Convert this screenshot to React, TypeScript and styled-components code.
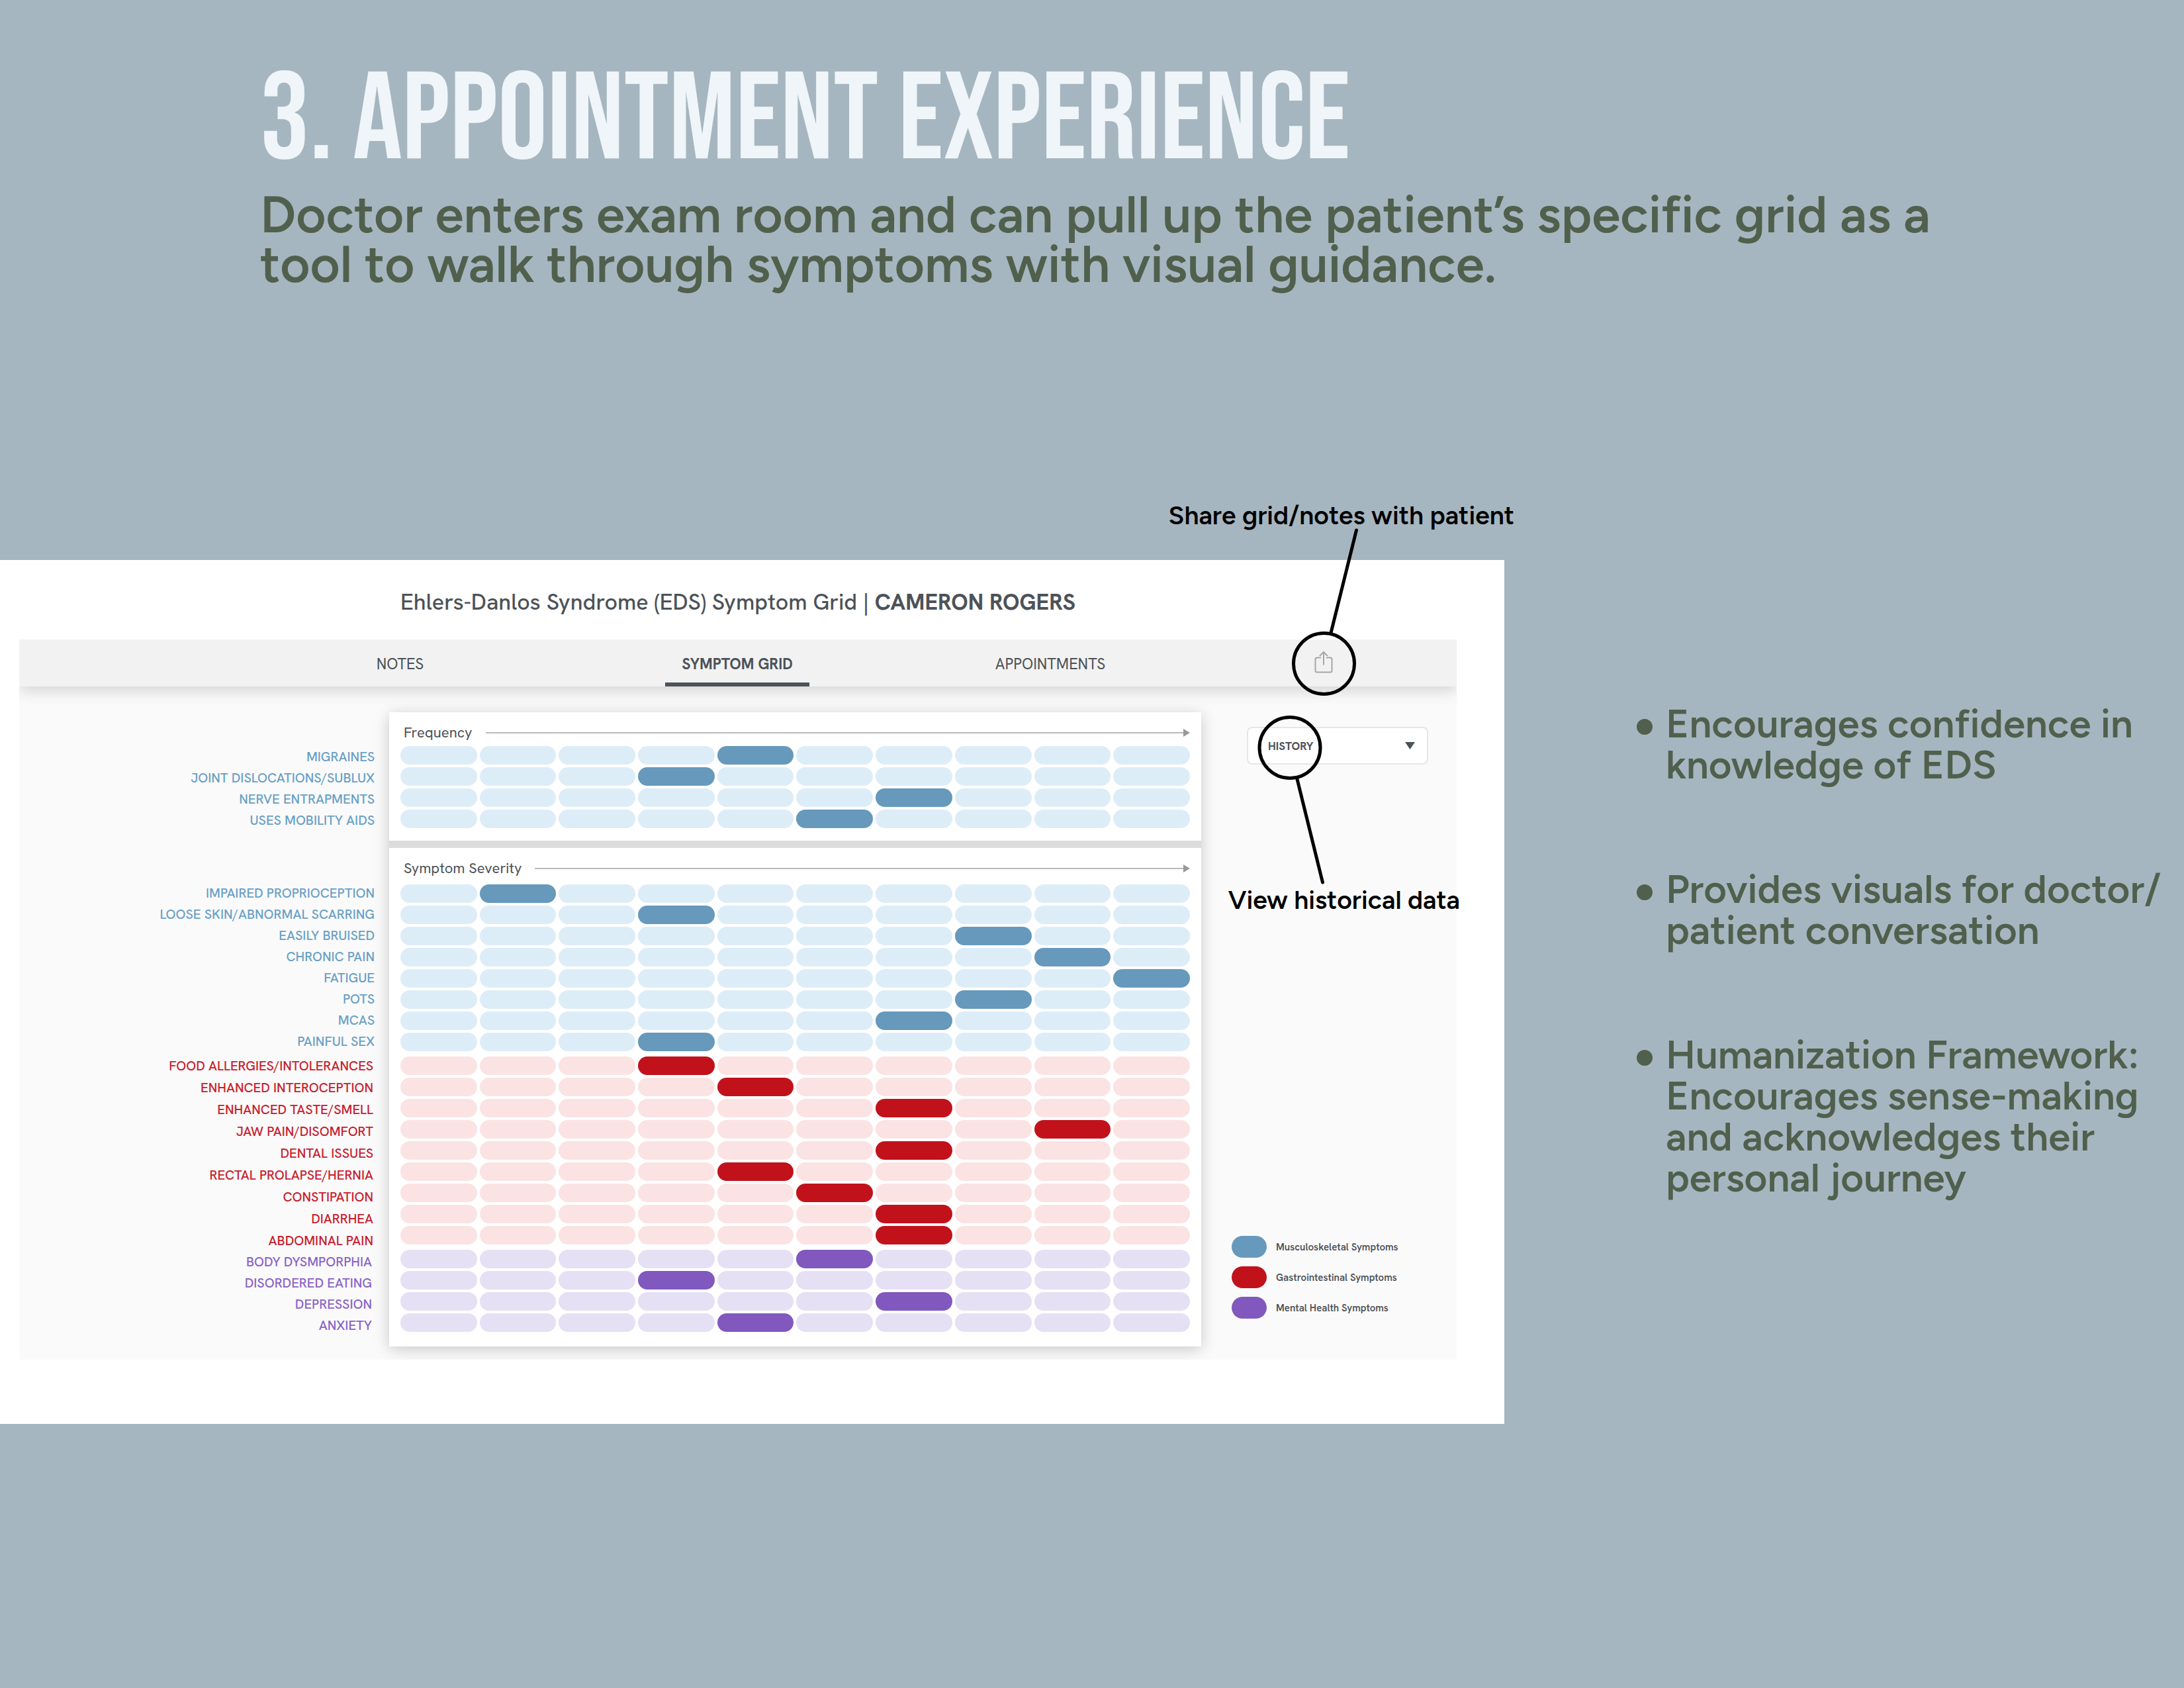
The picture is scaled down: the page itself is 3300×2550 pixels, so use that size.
import React from "react";
import styled, { createGlobalStyle } from "styled-components";

const displayFont = `"Bebas Neue", "Roboto Condensed", Roboto, sans-serif`;
const copyFont = `Figtree, Lato, Inter, sans-serif`;
const uiFont = `"Hanken Grotesk", Lato, Roboto, sans-serif`;

const ink = "#4d5258";

type Tone = "blue" | "red" | "purple";

const tones: Record<Tone, { solid: string; soft: string; text: string; inset: number; gap: number }> = {
  blue: { solid: "#6699bb", soft: "#ddedf8", text: "#68a0c6", inset: 22, gap: 8 },
  red: { solid: "#c1121c", soft: "#fbe3e3", text: "#c8202c", inset: 24, gap: 9 },
  purple: { solid: "#8058be", soft: "#e6e0f4", text: "#8a62c8", inset: 26, gap: 8 },
};

type Symptom = [name: string, level: number];
type Group = { id: string; tone: Tone; before: number; symptoms: Symptom[] };

const frequency: Group[] = [
  {
    id: "frequency",
    tone: "blue",
    before: 0,
    symptoms: [
      ["MIGRAINES", 5],
      ["JOINT DISLOCATIONS/SUBLUX", 4],
      ["NERVE ENTRAPMENTS", 7],
      ["USES MOBILITY AIDS", 6],
    ],
  },
];

const severity: Group[] = [
  {
    id: "musculoskeletal",
    tone: "blue",
    before: 86,
    symptoms: [
      ["IMPAIRED PROPRIOCEPTION", 2],
      ["LOOSE SKIN/ABNORMAL SCARRING", 4],
      ["EASILY BRUISED", 8],
      ["CHRONIC PAIN", 9],
      ["FATIGUE", 10],
      ["POTS", 8],
      ["MCAS", 7],
      ["PAINFUL SEX", 4],
    ],
  },
  {
    id: "gastrointestinal",
    tone: "red",
    before: 13,
    symptoms: [
      ["FOOD ALLERGIES/INTOLERANCES", 4],
      ["ENHANCED INTEROCEPTION", 5],
      ["ENHANCED TASTE/SMELL", 7],
      ["JAW PAIN/DISOMFORT", 9],
      ["DENTAL ISSUES", 7],
      ["RECTAL PROLAPSE/HERNIA", 5],
      ["CONSTIPATION", 6],
      ["DIARRHEA", 7],
      ["ABDOMINAL PAIN", 7],
    ],
  },
  {
    id: "mental",
    tone: "purple",
    before: 8,
    symptoms: [
      ["BODY DYSMPORPHIA", 6],
      ["DISORDERED EATING", 4],
      ["DEPRESSION", 7],
      ["ANXIETY", 5],
    ],
  },
];

const levels = Array.from({ length: 10 }, (_, i) => i + 1);

const GlobalStyle = createGlobalStyle`
  *, *::before, *::after { box-sizing: border-box; }
  body { margin: 0; background: #a6b6c0; }
  h1, h2, h3, p, ul { margin: 0; padding: 0; font-weight: inherit; }
  ul { list-style: none; }
  button, select, input { font: inherit; color: inherit; margin: 0; }
`;

const Page = styled.div`
  min-height: 100vh;
  overflow-x: hidden;
  background: #a6b6c0;
`;

const Intro = styled.header`
  padding: 99px 300px 0 393px;
`;

const Title = styled.h1`
  color: #eff5f8;
  font: 400 187px/168px ${displayFont};
`;

const Subtitle = styled.p`
  margin-top: 20px;
  color: #51604d;
  font: 600 78px/75px ${copyFont};
`;

const Main = styled.main`
  display: grid;
  grid-template-columns: 2273fr 1027fr;
  align-items: start;
  margin-top: 409px;
`;

const Panel = styled.section`
  position: relative;
  padding: 0 72px 97px 29px;
  background: #ffffff;
  color: ${ink};
  font-family: ${uiFont};
`;

const PanelTitle = styled.h2`
  padding-top: 6px;
  font-size: 34px;
  font-weight: 500;
  line-height: 114px;
  text-align: center;

  strong {
    font-weight: 700;
  }
`;

const Screen = styled.div`
  overflow: hidden;
  background: #fafafa;
`;

const Nav = styled.nav`
  position: relative;
  display: grid;
  grid-template-columns: 497fr 522fr 424fr 402fr;
  justify-items: center;
  height: 71px;
  padding-left: 327px;
  background: #f2f2f2;
  box-shadow: 0 6px 22px rgba(0, 0, 0, 0.16);
`;

const Tab = styled.button<{ $active?: boolean }>`
  padding: 2px 25px 0;
  border: 0;
  background: none;
  box-shadow: ${(p) => (p.$active ? `inset 0 -6px ${ink}` : "none")};
  font-size: 23px;
  font-weight: ${(p) => (p.$active ? 700 : 400)};
  cursor: pointer;
`;

const IconButton = styled.button`
  display: flex;
  align-items: center;
  padding: 0 12px 4px;
  border: 0;
  background: none;
  cursor: pointer;
`;

const Board = styled.div`
  display: grid;
  grid-template-columns: 559fr 1227fr 386fr;
  padding: 39px 0 20px;
`;

const Labels = styled.div`
  padding-top: 55px;
`;

const LabelGroup = styled.ul<{ $tone: Tone; $before: number }>`
  display: flex;
  flex-direction: column;
  gap: ${(p) => tones[p.$tone].gap}px;
  margin-top: ${(p) => p.$before}px;
  padding-right: ${(p) => tones[p.$tone].inset}px;
  color: ${(p) => tones[p.$tone].text};
  font-size: 20px;
  font-weight: 500;
  line-height: 24px;
  text-align: right;
  white-space: nowrap;
`;

const Cards = styled.div`
  display: flex;
  flex-direction: column;
  gap: 11px;
  background: #dcdcdc;
  box-shadow: 0 4px 22px rgba(0, 0, 0, 0.2);
`;

const Card = styled.section<{ $gap: number; $bottom: number }>`
  display: flex;
  flex-direction: column;
  gap: ${(p) => p.$gap}px;
  padding: 14px 17px ${(p) => p.$bottom}px;
  background: #ffffff;
`;

const CardHeader = styled.div`
  display: flex;
  align-items: center;
  gap: 20px;
  padding-left: 5px;
`;

const CardTitle = styled.h3`
  font-size: 22px;
  font-weight: 400;
  line-height: 34px;
`;

const Arrow = styled.div`
  display: flex;
  flex: 1;
  align-items: center;

  &::before {
    content: "";
    flex: 1;
    height: 2px;
    background: #b9b9b9;
  }

  &::after {
    content: "";
    border: 6px solid transparent;
    border-right: 0;
    border-left: 10px solid #999999;
  }
`;

const Scales = styled.div`
  display: grid;
  gap: 8px;
`;

const ScaleGroup = styled.div`
  display: grid;
  gap: 4px;
`;

const Scale = styled.div`
  display: grid;
  grid-template-columns: repeat(10, 1fr);
  column-gap: 4px;
`;

const Pill = styled.input<{ $tone: Tone }>`
  appearance: none;
  width: 100%;
  height: 28px;
  border-radius: 14px;
  background: ${(p) => tones[p.$tone].soft};
  cursor: pointer;

  &:checked {
    background: ${(p) => tones[p.$tone].solid};
  }
`;

const Side = styled.aside`
  display: flex;
  flex-direction: column;
  justify-content: space-between;
  padding: 22px 43px 42px 46px;
`;

const SelectBox = styled.div`
  position: relative;
  margin-left: 23px;

  svg {
    position: absolute;
    top: 23px;
    right: 20px;
    pointer-events: none;
  }
`;

const Select = styled.select`
  appearance: none;
  width: 100%;
  height: 57px;
  padding: 0 30px;
  border: 2px solid #e6e6e6;
  border-radius: 8px;
  background: #ffffff;
  font-size: 17px;
  font-weight: 700;
`;

const Legend = styled.ul`
  display: grid;
  gap: 13px;
`;

const LegendItem = styled.li<{ $tone: Tone }>`
  display: flex;
  align-items: center;
  gap: 14px;
  font-size: 15px;
  font-weight: 600;
  white-space: nowrap;

  &::before {
    content: "";
    width: 53px;
    height: 33px;
    border-radius: 17px;
    background: ${(p) => tones[p.$tone].solid};
  }
`;

const Callout = styled.p<{ $top: number; $right: number }>`
  position: absolute;
  top: ${(p) => p.$top}px;
  right: ${(p) => p.$right}px;
  color: #000000;
  font: 600 39px/48px ${copyFont};
  white-space: nowrap;
`;

const CalloutLines = styled.svg`
  position: absolute;
  top: -60px;
  right: 0;
  pointer-events: none;
`;

const Notes = styled.ul`
  display: grid;
  gap: 126px;
  padding: 216px 20px 0 200px;
  color: #51604d;
  font: 600 60px/62px ${copyFont};
`;

const Note = styled.li`
  display: flex;
  align-items: flex-start;
  gap: 20px;

  &::before {
    content: "";
    flex: none;
    width: 24px;
    height: 24px;
    margin-top: 24px;
    border-radius: 50%;
    background: #51604d;
  }
`;

function GroupLabels({ group }: { group: Group }) {
  return (
    <LabelGroup $tone={group.tone} $before={group.before}>
      {group.symptoms.map(([name], i) => (
        <li key={name} id={`${group.id}-${i}`}>
          {name}
        </li>
      ))}
    </LabelGroup>
  );
}

function GroupScales({ group }: { group: Group }) {
  return (
    <ScaleGroup>
      {group.symptoms.map(([name, level], i) => (
        <Scale key={name} role="radiogroup" aria-labelledby={`${group.id}-${i}`}>
          {levels.map((n) => (
            <Pill
              key={n}
              type="radio"
              name={`${group.id}-${i}`}
              value={n}
              aria-label={String(n)}
              defaultChecked={n === level}
              $tone={group.tone}
            />
          ))}
        </Scale>
      ))}
    </ScaleGroup>
  );
}

function ShareIcon() {
  return (
    <svg width="28" height="34" viewBox="0 0 28 34" fill="none" stroke="#a6a6a6" strokeWidth="2" aria-hidden="true">
      <path d="M10 10.500H4a2.500 2.500 0 0 0-2.500 2.500v17a2.500 2.500 0 0 0 2.500 2.500h20a2.500 2.500 0 0 0 2.500-2.500V13a2.500 2.500 0 0 0-2.500-2.500h-6" />
      <path d="M14 21.500V2M8 8l6-6 6 6" />
    </svg>
  );
}

export default function App() {
  return (
    <Page>
      <GlobalStyle />
      <Intro>
        <Title>3. APPOINTMENT EXPERIENCE</Title>
        <Subtitle>
          Doctor enters exam room and can pull up the patient’s specific grid as a tool to walk through symptoms with
          visual guidance.
        </Subtitle>
      </Intro>
      <Main>
        <Panel>
          <PanelTitle>
            Ehlers-Danlos Syndrome (EDS) Symptom Grid | <strong>CAMERON ROGERS</strong>
          </PanelTitle>
          <Screen>
            <Nav>
              <Tab type="button">NOTES</Tab>
              <Tab type="button" $active aria-current="page">
                SYMPTOM GRID
              </Tab>
              <Tab type="button">APPOINTMENTS</Tab>
              <IconButton type="button" aria-label="Share">
                <ShareIcon />
              </IconButton>
            </Nav>
            <Board>
              <Labels>
                {[...frequency, ...severity].map((group) => (
                  <GroupLabels key={group.id} group={group} />
                ))}
              </Labels>
              <Cards>
                <Card $gap={3} $bottom={19}>
                  <CardHeader>
                    <CardTitle>Frequency</CardTitle>
                    <Arrow />
                  </CardHeader>
                  <Scales>
                    {frequency.map((group) => (
                      <GroupScales key={group.id} group={group} />
                    ))}
                  </Scales>
                </Card>
                <Card $gap={7} $bottom={22}>
                  <CardHeader>
                    <CardTitle>Symptom Severity</CardTitle>
                    <Arrow />
                  </CardHeader>
                  <Scales>
                    {severity.map((group) => (
                      <GroupScales key={group.id} group={group} />
                    ))}
                  </Scales>
                </Card>
              </Cards>
              <Side>
                <SelectBox>
                  <Select aria-label="History" defaultValue="history">
                    <option value="history">HISTORY</option>
                  </Select>
                  <svg width="15" height="11" viewBox="0 0 15 11" aria-hidden="true">
                    <path d="M0 0h15L7.500 11z" fill={ink} />
                  </svg>
                </SelectBox>
                <Legend>
                  <LegendItem $tone="blue">Musculoskeletal Symptoms</LegendItem>
                  <LegendItem $tone="red">Gastrointestinal Symptoms</LegendItem>
                  <LegendItem $tone="purple">Mental Health Symptoms</LegendItem>
                </Legend>
              </Side>
            </Board>
          </Screen>
          <Callout $top={-91} $right={-15}>
            Share grid/notes with patient
          </Callout>
          <Callout $top={490} $right={67}>
            View historical data
          </Callout>
          <CalloutLines
            width="400"
            height="600"
            viewBox="0 0 400 600"
            fill="none"
            stroke="#000000"
            strokeWidth="5"
            strokeLinecap="round"
            aria-hidden="true"
          >
            <circle cx="127.500" cy="216.500" r="46" />
            <path d="M176.500 15L138 170" />
            <circle cx="76" cy="343.500" r="46" />
            <path d="M87 391l38.500 156" />
          </CalloutLines>
        </Panel>
        <Notes>
          <Note>
            <span>Encourages confidence in knowledge of EDS</span>
          </Note>
          <Note>
            <span>
              Provides visuals for doctor/
              <wbr />
              patient conversation
            </span>
          </Note>
          <Note>
            <span>Humanization Framework: Encourages sense-making and acknowledges their personal journey</span>
          </Note>
        </Notes>
      </Main>
    </Page>
  );
}
